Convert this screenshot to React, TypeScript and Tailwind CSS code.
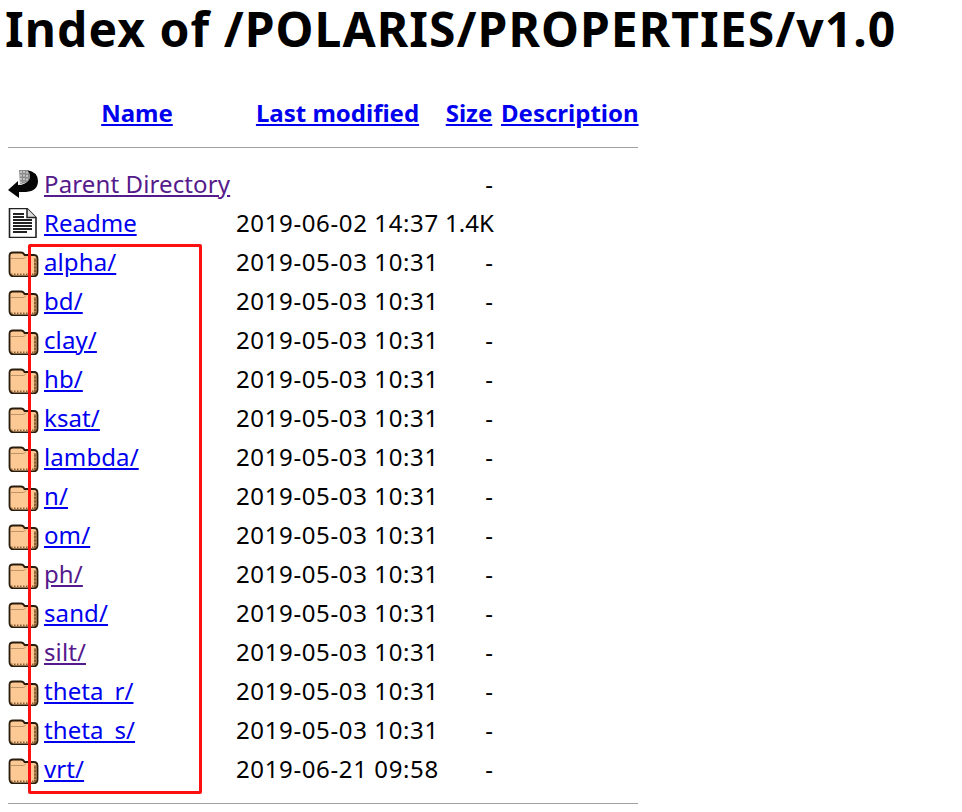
const F = () => (
  <svg width="31" height="30" viewBox="0 0 31 30" className="block">
    <path d="M1.5 9 Q1.5 5.5 5 5.5 H13 Q15.5 5.5 16.5 8 H26 Q29.5 8 29.5 12 V25 Q29.5 29.5 25 29.5 H6 Q1.5 29.5 1.5 25 Z" fill="#fcc994" stroke="#2a1c0c" strokeWidth="1.8" />
    <path d="M3 11.5 H15 Q17 11.5 18 9.5" fill="none" stroke="#c09468" strokeWidth="1" />
    <path d="M26 11 H28.5 V26 Q28.5 28.5 26 28.5 Z" fill="#8a6034" />
    <path d="M3 27.2 H26" stroke="#8a6034" strokeWidth="1.6" strokeDasharray="1.5 1.5" />
    <path d="M27 11 V26" stroke="#edb781" strokeWidth="1" strokeDasharray="1.5 2" />
  </svg>
);
const Back = () => (
  <svg width="31" height="30" viewBox="0 0 31 30" className="block">
    <path d="M0 21 L10 12 L10 16 Q18 16 21 10 Q23 6 19 1 Q30 3 30 12 Q30 22 18 23 L11 23 L11 29 Z" fill="#060606" />
    <path d="M11 1 L19 1 Q24 6 21 11 Q19 14 12 15 Z" fill="#8b8b8b" />
    <path d="M13 2 V14 M16 2 V13 M19 2.5 V12" stroke="#e8e8e8" strokeWidth="1.2" strokeDasharray="2 1.5" />
  </svg>
);
const Doc = () => (
  <svg width="30" height="30" viewBox="0 0 30 30" className="block">
    <path d="M1.5 0.5 H19 L28 9.5 V29.5 H1.5 Z" fill="#fff" stroke="#222" strokeWidth="1.6" />
    <path d="M19 0.5 V9.5 H28" fill="#ddd" stroke="#222" strokeWidth="1.5" />
    <path d="M5 6 H16 M5 9 H16 M5 12 H24 M5 15 H24 M5 18 H24 M5 21 H24 M5 24 H19" stroke="#222" strokeWidth="2" />
  </svg>
);
const rows: [string, string, boolean][] = [
  ["alpha/", "2019-05-03 10:31", false],
  ["bd/", "2019-05-03 10:31", false],
  ["clay/", "2019-05-03 10:31", false],
  ["hb/", "2019-05-03 10:31", false],
  ["ksat/", "2019-05-03 10:31", false],
  ["lambda/", "2019-05-03 10:31", false],
  ["n/", "2019-05-03 10:31", false],
  ["om/", "2019-05-03 10:31", false],
  ["ph/", "2019-05-03 10:31", true],
  ["sand/", "2019-05-03 10:31", false],
  ["silt/", "2019-05-03 10:31", true],
  ["theta_r/", "2019-05-03 10:31", false],
  ["theta_s/", "2019-05-03 10:31", false],
  ["vrt/", "2019-06-21 09:58", false],
];
const blue = "text-[#0000ee] underline";
const purple = "text-[#551a8b] underline";
const td = "p-0 h-[37px] align-middle whitespace-nowrap";
const date = td + " pl-[4px] tracking-[0.62px]";
export default function App() {
  return (
    <div className="relative h-[812px] w-[962px] overflow-hidden bg-white text-[24px] leading-[32px] text-black" style={{ fontFamily: '"Noto Sans", "Noto Sans CJK SC", sans-serif' }}>
      <div className="px-2">
        <h1 className="ml-[-3px] pt-[2px] text-[48px] font-bold leading-[54px] tracking-[1.06px] whitespace-nowrap">Index of /POLARIS/PROPERTIES/v1.0</h1>
        <table className="mt-[36px] w-[634px] table-fixed border-separate border-spacing-[2px] ml-[-2px]">
          <colgroup>
            <col className="w-[34px]" />
            <col className="w-[186px]" />
            <col className="w-[211px]" />
            <col className="w-[48px]" />
            <col />
          </colgroup>
          <tbody>
            <tr>
              <td className={td}></td>
              <th className={td + " text-center font-bold"}><a className={blue}>Name</a></th>
              <th className={td + " text-center font-bold"}><a className={blue}>Last modified</a></th>
              <th className={td + " text-center font-bold"}><a className={blue}>Size</a></th>
              <th className={td + " text-left font-bold pl-[6px]"}><a className={blue}>Description</a></th>
            </tr>
            <tr><td colSpan={5} className="h-[30px] p-0 align-middle"><div className="mt-[-1px] h-px bg-[#a0a0a0]"></div></td></tr>
            <tr>
              <td className={td}><Back /></td>
              <td className={td + " tracking-[0.12px]"}><a className={purple}>Parent Directory</a></td>
              <td className={td}></td>
              <td className={td + " text-right"}>-</td>
              <td className={td}></td>
            </tr>
            <tr>
              <td className={td}><Doc /></td>
              <td className={td}><a className={blue}>Readme</a></td>
              <td className={date}>2019-06-02 14:37</td>
              <td className={td + " text-right"}>1.4K</td>
              <td className={td}></td>
            </tr>
            {rows.map(([n, d, v]) => (
              <tr key={n}>
                <td className={td}><F /></td>
                <td className={td + " tracking-[0.1px]"}><a className={v ? purple : blue}>{n}</a></td>
                <td className={date}>{d}</td>
                <td className={td + " text-right"}>-</td>
                <td className={td}></td>
              </tr>
            ))}
          </tbody>
        </table>
        <div className="mt-[14px] h-px w-[630px] bg-[#a0a0a0]"></div>
      </div>
      <div className="absolute left-[28px] top-[244px] h-[550px] w-[174px] rounded-[2px] border-[3px] border-[#ff1010]"></div>
    </div>
  );
}
